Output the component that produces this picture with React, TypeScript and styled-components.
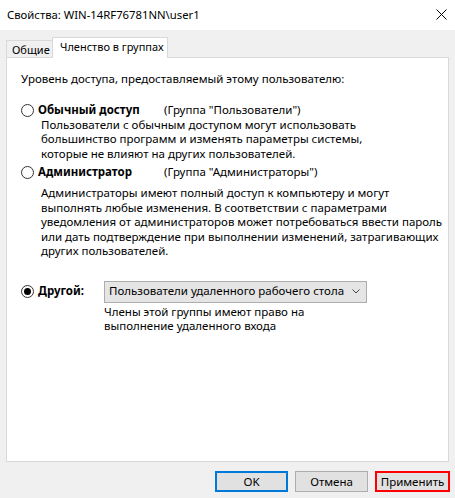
import React from "react";
import styled, { createGlobalStyle, css } from "styled-components";

const GlobalStyle = createGlobalStyle`
  html, body {
    margin: 0;
    padding: 0;
  }
  body {
    font-family: "Noto Sans", "Open Sans", sans-serif;
    font-size: 11.5px;
    color: #000;
  }
`;

const Window = styled.div`
  width: 455px;
  height: 498px;
  background: #f0f0f0;
  display: flex;
  flex-direction: column;
  overflow: hidden;
  white-space: nowrap;
`;

const TitleBar = styled.div`
  height: 29px;
  background: #fff;
  display: flex;
  align-items: center;
  justify-content: space-between;
  padding: 0 8px 1px 7px;
`;

const Title = styled.span`
  font-size: 11.3px;
  line-height: 14px;
`;

const TabStrip = styled.div`
  height: 27px;
  display: flex;
  align-items: flex-end;
  padding: 0 6px;
`;

const Tab = styled.div<{ active?: boolean }>(
  (props) => css`
    box-sizing: border-box;
    border: 1px solid #d9d9d9;
    border-bottom: none;
    display: flex;
    align-items: center;
    font-size: 11px;
    ${props.active
      ? css`
          width: 116px;
          height: 21px;
          background: #fff;
          margin-bottom: -1px;
          position: relative;
          z-index: 1;
          padding: 0 0 3px 7px;
        `
      : css`
          width: 46px;
          height: 17px;
          background: #f0f0f0;
          border-right: none;
          padding: 1px 0 0 5px;
        `}
  `
);

const Panel = styled.div`
  box-sizing: border-box;
  margin: 0 6px;
  height: 405px;
  background: #fff;
  border: 1px solid #d9d9d9;
  padding: 14px 10px 0 14px;
  line-height: 14.5px;
`;

const Intro = styled.div`
  margin-bottom: 16px;
`;

const OptionRow = styled.div<{ gap?: number }>(
  (props) => css`
    display: flex;
    align-items: center;
    height: 15px;
    margin-top: ${props.gap ?? 0}px;
  `
);

const RadioLabel = styled.div<{ width: number }>(
  (props) => css`
    display: flex;
    align-items: center;
    gap: 4px;
    width: ${props.width}px;
    flex-shrink: 0;
    font-weight: 700;
  `
);

const Radio = styled.span<{ checked?: boolean }>(
  (props) => css`
    box-sizing: border-box;
    width: 13px;
    height: 13px;
    border-radius: 50%;
    border: 1px solid #333;
    background: #fff;
    display: flex;
    align-items: center;
    justify-content: center;
    &::after {
      content: "";
      width: 7px;
      height: 7px;
      border-radius: 50%;
      background: ${props.checked ? "#000" : "transparent"};
    }
  `
);

const Description = styled.div<{ indent: number; gap?: number }>(
  (props) => css`
    padding-left: ${props.indent}px;
    margin-top: ${props.gap ?? 0}px;
  `
);

const OtherRow = styled.div`
  display: flex;
  align-items: center;
  margin-top: 22px;
  height: 22px;
`;

const Select = styled.div`
  box-sizing: border-box;
  width: 263px;
  height: 22px;
  background: #e5e5e5;
  border: 1px solid #adadad;
  display: flex;
  align-items: center;
  justify-content: space-between;
  padding: 0 6px 0 4px;
`;

const ButtonRow = styled.div`
  display: flex;
  justify-content: flex-end;
  align-items: center;
  gap: 7px;
  padding: 9px 5px 0 0;
`;

const Button = styled.div<{ variant?: "default" | "marked" }>(
  (props) => css`
    box-sizing: border-box;
    width: 73px;
    height: 21px;
    background: #e1e1e1;
    border: 1px solid #adadad;
    display: flex;
    align-items: center;
    justify-content: center;
    ${props.variant === "default" &&
    css`
      border: 2px solid #0078d7;
    `}
    ${props.variant === "marked" &&
    css`
      width: 75px;
      border: 2px solid #ff0000;
    `}
  `
);

function CloseIcon() {
  return (
    <svg width="11" height="11" viewBox="0 0 11 11">
      <path d="M0.5 0.5 L10.5 10.5 M10.5 0.5 L0.5 10.5" stroke="#000" strokeWidth="1" />
    </svg>
  );
}

function Chevron() {
  return (
    <svg width="8" height="5" viewBox="0 0 8 5">
      <path d="M0.5 0.5 L4 4 L7.5 0.5" stroke="#444" strokeWidth="1" fill="none" />
    </svg>
  );
}

export default function App() {
  return (
    <>
      <GlobalStyle />
      <Window>
        <TitleBar>
          <Title>Свойства: WIN-14RF76781NN\user1</Title>
          <CloseIcon />
        </TitleBar>

        <TabStrip>
          <Tab>Общие</Tab>
          <Tab active>Членство в группах</Tab>
        </TabStrip>

        <Panel>
          <Intro>Уровень доступа, предоставляемый этому пользователю:</Intro>

          <OptionRow>
            <RadioLabel width={143}>
              <Radio />
              Обычный доступ
            </RadioLabel>
            (Группа "Пользователи")
          </OptionRow>
          <Description indent={20}>
            Пользователи с обычным доступом могут использовать
            <br />
            большинство программ и изменять параметры системы,
            <br />
            которые не влияют на других пользователей.
          </Description>

          <OptionRow gap={4}>
            <RadioLabel width={143}>
              <Radio />
              Администратор
            </RadioLabel>
            (Группа "Администраторы")
          </OptionRow>
          <Description indent={20} gap={6}>
            Администраторы имеют полный доступ к компьютеру и могут
            <br />
            выполнять любые изменения. В соответствии с параметрами
            <br />
            уведомления от администраторов может потребоваться ввести пароль
            <br />
            или дать подтверждение при выполнении изменений, затрагивающих
            <br />
            других пользователей.
          </Description>

          <OtherRow>
            <RadioLabel width={83}>
              <Radio checked />
              Другой:
            </RadioLabel>
            <Select>
              Пользователи удаленного рабочего стола
              <Chevron />
            </Select>
          </OtherRow>
          <Description indent={83} gap={2}>
            Члены этой группы имеют право на
            <br />
            выполнение удаленного входа
          </Description>
        </Panel>

        <ButtonRow>
          <Button variant="default">OK</Button>
          <Button>Отмена</Button>
          <Button variant="marked">Применить</Button>
        </ButtonRow>
      </Window>
    </>
  );
}
